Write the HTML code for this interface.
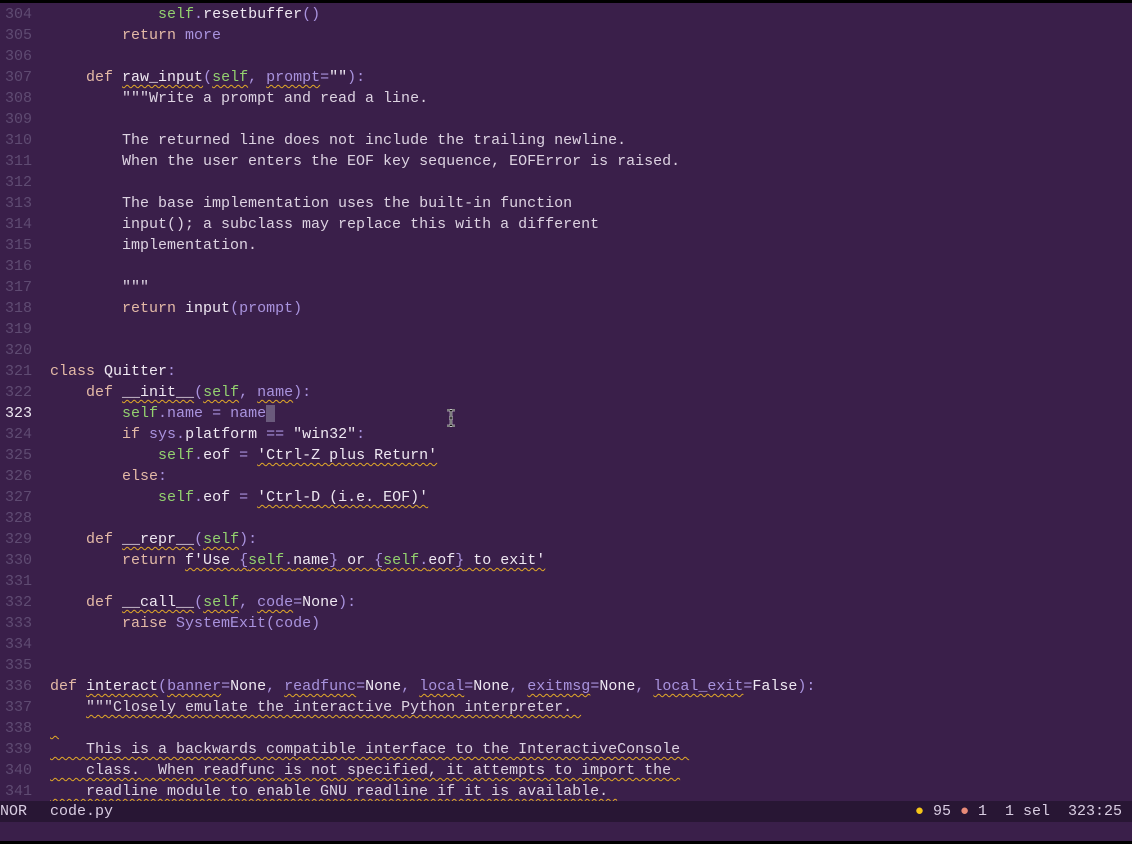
<!DOCTYPE html>
<html><head><meta charset="utf-8"><style>
html,body{margin:0;padding:0}
body{width:1132px;height:844px;background:#000;position:relative;overflow:hidden;font-family:"Liberation Mono",monospace;font-size:15px}
#ed{position:absolute;left:0;top:3px;width:1132px;height:838px;background:#3a1f4a}
.l{position:absolute;left:0;height:21px;line-height:21px;white-space:pre;color:#e6dde9}
.n{display:inline-block;width:32px;text-align:right;color:#5f4b72;margin-right:18px}
.cur{color:#ece6f0}
.k{color:#e3b9a6}.s{color:#93d16f}.p{color:#a993de}.w{color:#efe8f2}.d{color:#ddd3e2}
.u{text-decoration:underline wavy #e2a928;text-decoration-thickness:1px;text-underline-offset:3px}
#sb{position:absolute;left:0;top:801px;width:1132px;height:21px;background:#281634;line-height:21px;color:#d9cde2;white-space:pre}
</style></head><body>
<div id="ed"></div>
<div id="lines"></div>
<script>
var L=[
'            <span class="s">self</span><span class="p">.</span><span class="w">resetbuffer</span><span class="p">()</span>',
'        <span class="k">return</span> <span class="p">more</span>',
'',
'    <span class="k">def</span> <span class="w u">raw_input</span><span class="p">(</span><span class="s u">self</span><span class="p">,</span> <span class="p u">prompt</span><span class="p">=</span><span class="w">""</span><span class="p">):</span>',
'        <span class="d">"""Write a prompt and read a line.</span>',
'',
'        <span class="d">The returned line does not include the trailing newline.</span>',
'        <span class="d">When the user enters the EOF key sequence, EOFError is raised.</span>',
'',
'        <span class="d">The base implementation uses the built-in function</span>',
'        <span class="d">input(); a subclass may replace this with a different</span>',
'        <span class="d">implementation.</span>',
'',
'        <span class="d">"""</span>',
'        <span class="k">return</span> <span class="w">input</span><span class="p">(prompt)</span>',
'',
'',
'<span class="k">class</span> <span class="w">Quitter</span><span class="p">:</span>',
'    <span class="k">def</span> <span class="w u">__init__</span><span class="p">(</span><span class="s u">self</span><span class="p">,</span> <span class="p u">name</span><span class="p">):</span>',
'        <span class="s">self</span><span class="p">.name</span> <span class="p">=</span> <span class="p">name</span><span style="background:#6a5a7c"> </span>',
'        <span class="k">if</span> <span class="p">sys.</span><span class="w">platform</span> <span class="p">==</span> <span class="w">"win32"</span><span class="p">:</span>',
'            <span class="s">self</span><span class="p">.</span><span class="w">eof</span> <span class="p">=</span> <span class="w u">\'Ctrl-Z plus Return\'</span>',
'        <span class="k">else</span><span class="p">:</span>',
'            <span class="s">self</span><span class="p">.</span><span class="w">eof</span> <span class="p">=</span> <span class="w u">\'Ctrl-D (i.e. EOF)\'</span>',
'',
'    <span class="k">def</span> <span class="w u">__repr__</span><span class="p">(</span><span class="s u">self</span><span class="p">):</span>',
'        <span class="k">return</span> <span class="u"><span class="w">f\'Use </span><span class="p">{</span><span class="s">self</span><span class="p">.</span><span class="w">name</span><span class="p">}</span><span class="w"> or </span><span class="p">{</span><span class="s">self</span><span class="p">.</span><span class="w">eof</span><span class="p">}</span><span class="w"> to exit\'</span></span>',
'',
'    <span class="k">def</span> <span class="w u">__call__</span><span class="p">(</span><span class="s u">self</span><span class="p">,</span> <span class="p u">code</span><span class="p">=</span><span class="w">None</span><span class="p">):</span>',
'        <span class="k">raise</span> <span class="p">SystemExit(code)</span>',
'',
'',
'<span class="k">def</span> <span class="w u">interact</span><span class="p">(</span><span class="p u">banner</span><span class="p">=</span><span class="w">None</span><span class="p">,</span> <span class="p u">readfunc</span><span class="p">=</span><span class="w">None</span><span class="p">,</span> <span class="p u">local</span><span class="p">=</span><span class="w">None</span><span class="p">,</span> <span class="p u">exitmsg</span><span class="p">=</span><span class="w">None</span><span class="p">,</span> <span class="p u">local_exit</span><span class="p">=</span><span class="w">False</span><span class="p">):</span>',
'    <span class="d u">"""Closely emulate the interactive Python interpreter. </span>',
'<span class="u"> </span>',
'<span class="d u">    This is a backwards compatible interface to the InteractiveConsole </span>',
'<span class="d u">    class.  When readfunc is not specified, it attempts to import the </span>',
'<span class="d u">    readline module to enable GNU readline if it is available. </span>'
];
var h='';
for(var i=0;i<L.length;i++){var n=304+i;
h+='<div class="l" style="top:'+(4+i*21)+'px"><span class="n'+(n==323?' cur':'')+'">'+n+'</span>'+L[i]+'</div>';}
document.getElementById('lines').innerHTML=h;
</script>
<svg style="position:absolute;left:445px;top:409px" width="12" height="18" viewBox="0 0 12 18"><path d="M2 1h3l1 1 1-1h3M6 2v14M2 17h3l1-1 1 1h3M4 9h4" stroke="#fff" stroke-width="2.5" fill="none"/><path d="M2 1h3l1 1 1-1h3M6 2v14M2 17h3l1-1 1 1h3M4 9h4" stroke="#000" stroke-width="1" fill="none"/></svg>
<div id="sb"><span style="position:absolute;left:0;color:#d9cde2">NOR</span><span style="position:absolute;left:50px">code.py</span><span style="position:absolute;right:10px"><span style="color:#f5c518">●</span> 95 <span style="color:#e88a78">●</span> 1  1 sel  323:25</span></div>
</body></html>
